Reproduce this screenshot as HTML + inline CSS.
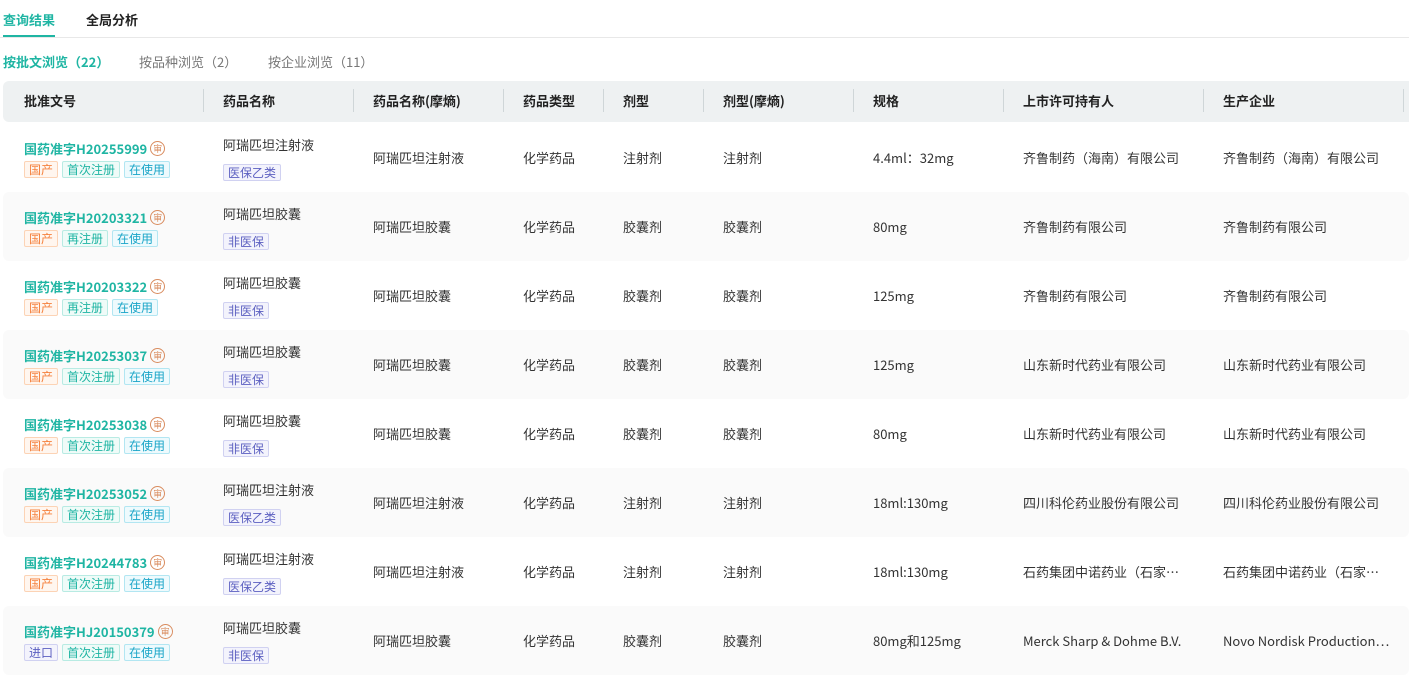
<!DOCTYPE html>
<html><head><meta charset="utf-8"><style>
*{box-sizing:border-box;margin:0;padding:0}
body{width:1409px;height:678px;overflow:hidden;background:#fff;font-family:"Noto Sans CJK SC","Liberation Sans",sans-serif;color:#333;font-size:13px;line-height:18px}
.tabs{position:absolute;left:0;top:0;width:1409px;height:38px;border-bottom:1px solid #e8e8e8}
.tab{position:absolute;top:11px;font-size:13px;font-weight:bold;color:#222}
.tab.on{color:#1fb5a3}
.ink{position:absolute;left:3px;top:35px;width:52px;height:2px;background:#1fb5a3}
.sub{position:absolute;top:53px;font-size:13px;color:#777}
.sub.on{color:#1fb5a3;font-weight:bold}
.hd{position:absolute;left:3px;top:81px;width:1406px;height:41px;background:#eef1f2;border-radius:6px 0 0 6px}
.hd div{position:absolute;top:11px;font-weight:bold;color:#222}
.sep{position:absolute;top:89px;width:1px;height:23px;background:#cfd6d8}
.row{position:absolute;left:3px;width:1406px;height:69px;border-radius:6px}
.row.g{background:#fafafa}
.c{position:absolute;top:26px;white-space:nowrap}
.no{position:absolute;left:21px;top:17px;color:#1fb5a3;font-weight:bold;white-space:nowrap}
.sh{display:inline-block;width:15px;height:15px;border:1px solid #d98c5f;border-radius:50%;color:#d98c5f;font-size:9px;line-height:13px;text-align:center;font-weight:normal;vertical-align:top;position:relative;top:1px;margin-left:3px}
.tags{position:absolute;left:21px;top:38px;white-space:nowrap;line-height:0}
.t{display:inline-block;height:17px;line-height:15px;padding:0 4px;border:1px solid;font-size:12px;border-radius:2px;margin-right:4px;vertical-align:top}
.o{color:#f5813d;background:#fff6ef;border-color:#fcd3b5}
.gr{color:#1fb5a3;background:#effbf8;border-color:#b8ebe3}
.b{color:#1aa5c8;background:#eefafd;border-color:#b2e6f2}
.p{color:#5b5fc0;background:#f3f3fc;border-color:#d0d1f1}
.nm{position:absolute;left:220px;top:13px}
.nt{position:absolute;left:220px;top:41px;line-height:0}
</style></head><body>
<div class="tabs"><div class="tab on" style="left:3px">查询结果</div><div class="tab" style="left:86px">全局分析</div><div class="ink"></div></div>
<div class="sub on" style="left:3px">按批文浏览（22）</div>
<div class="sub" style="left:139px">按品种浏览（2）</div>
<div class="sub" style="left:268px">按企业浏览（11）</div>
<div class="hd">
<div style="left:21px">批准文号</div><div style="left:220px">药品名称</div><div style="left:370px">药品名称(摩熵)</div><div style="left:520px">药品类型</div><div style="left:620px">剂型</div><div style="left:720px">剂型(摩熵)</div><div style="left:870px">规格</div><div style="left:1020px">上市许可持有人</div><div style="left:1220px">生产企业</div>
</div>
<div class="sep" style="left:203px"></div><div class="sep" style="left:353px"></div><div class="sep" style="left:503px"></div><div class="sep" style="left:603px"></div><div class="sep" style="left:703px"></div><div class="sep" style="left:853px"></div><div class="sep" style="left:1003px"></div><div class="sep" style="left:1203px"></div><div class="sep" style="left:1403px"></div>

<div class="row" style="top:123px"><div class="no">国药准字H20255999<span class="sh">审</span></div><div class="tags"><span class="t o">国产</span><span class="t gr">首次注册</span><span class="t b">在使用</span></div><div class="nm">阿瑞匹坦注射液</div><div class="nt"><span class="t p">医保乙类</span></div><div class="c" style="left:370px">阿瑞匹坦注射液</div><div class="c" style="left:520px">化学药品</div><div class="c" style="left:620px">注射剂</div><div class="c" style="left:720px">注射剂</div><div class="c" style="left:870px">4.4ml：32mg</div><div class="c" style="left:1020px">齐鲁制药（海南）有限公司</div><div class="c" style="left:1220px">齐鲁制药（海南）有限公司</div></div>

<div class="row g" style="top:192px"><div class="no">国药准字H20203321<span class="sh">审</span></div><div class="tags"><span class="t o">国产</span><span class="t gr">再注册</span><span class="t b">在使用</span></div><div class="nm">阿瑞匹坦胶囊</div><div class="nt"><span class="t p">非医保</span></div><div class="c" style="left:370px">阿瑞匹坦胶囊</div><div class="c" style="left:520px">化学药品</div><div class="c" style="left:620px">胶囊剂</div><div class="c" style="left:720px">胶囊剂</div><div class="c" style="left:870px">80mg</div><div class="c" style="left:1020px">齐鲁制药有限公司</div><div class="c" style="left:1220px">齐鲁制药有限公司</div></div>

<div class="row" style="top:261px"><div class="no">国药准字H20203322<span class="sh">审</span></div><div class="tags"><span class="t o">国产</span><span class="t gr">再注册</span><span class="t b">在使用</span></div><div class="nm">阿瑞匹坦胶囊</div><div class="nt"><span class="t p">非医保</span></div><div class="c" style="left:370px">阿瑞匹坦胶囊</div><div class="c" style="left:520px">化学药品</div><div class="c" style="left:620px">胶囊剂</div><div class="c" style="left:720px">胶囊剂</div><div class="c" style="left:870px">125mg</div><div class="c" style="left:1020px">齐鲁制药有限公司</div><div class="c" style="left:1220px">齐鲁制药有限公司</div></div>

<div class="row g" style="top:330px"><div class="no">国药准字H20253037<span class="sh">审</span></div><div class="tags"><span class="t o">国产</span><span class="t gr">首次注册</span><span class="t b">在使用</span></div><div class="nm">阿瑞匹坦胶囊</div><div class="nt"><span class="t p">非医保</span></div><div class="c" style="left:370px">阿瑞匹坦胶囊</div><div class="c" style="left:520px">化学药品</div><div class="c" style="left:620px">胶囊剂</div><div class="c" style="left:720px">胶囊剂</div><div class="c" style="left:870px">125mg</div><div class="c" style="left:1020px">山东新时代药业有限公司</div><div class="c" style="left:1220px">山东新时代药业有限公司</div></div>

<div class="row" style="top:399px"><div class="no">国药准字H20253038<span class="sh">审</span></div><div class="tags"><span class="t o">国产</span><span class="t gr">首次注册</span><span class="t b">在使用</span></div><div class="nm">阿瑞匹坦胶囊</div><div class="nt"><span class="t p">非医保</span></div><div class="c" style="left:370px">阿瑞匹坦胶囊</div><div class="c" style="left:520px">化学药品</div><div class="c" style="left:620px">胶囊剂</div><div class="c" style="left:720px">胶囊剂</div><div class="c" style="left:870px">80mg</div><div class="c" style="left:1020px">山东新时代药业有限公司</div><div class="c" style="left:1220px">山东新时代药业有限公司</div></div>

<div class="row g" style="top:468px"><div class="no">国药准字H20253052<span class="sh">审</span></div><div class="tags"><span class="t o">国产</span><span class="t gr">首次注册</span><span class="t b">在使用</span></div><div class="nm">阿瑞匹坦注射液</div><div class="nt"><span class="t p">医保乙类</span></div><div class="c" style="left:370px">阿瑞匹坦注射液</div><div class="c" style="left:520px">化学药品</div><div class="c" style="left:620px">注射剂</div><div class="c" style="left:720px">注射剂</div><div class="c" style="left:870px">18ml:130mg</div><div class="c" style="left:1020px">四川科伦药业股份有限公司</div><div class="c" style="left:1220px">四川科伦药业股份有限公司</div></div>

<div class="row" style="top:537px"><div class="no">国药准字H20244783<span class="sh">审</span></div><div class="tags"><span class="t o">国产</span><span class="t gr">首次注册</span><span class="t b">在使用</span></div><div class="nm">阿瑞匹坦注射液</div><div class="nt"><span class="t p">医保乙类</span></div><div class="c" style="left:370px">阿瑞匹坦注射液</div><div class="c" style="left:520px">化学药品</div><div class="c" style="left:620px">注射剂</div><div class="c" style="left:720px">注射剂</div><div class="c" style="left:870px">18ml:130mg</div><div class="c" style="left:1020px">石药集团中诺药业（石家…</div><div class="c" style="left:1220px">石药集团中诺药业（石家…</div></div>

<div class="row g" style="top:606px"><div class="no">国药准字HJ20150379<span class="sh">审</span></div><div class="tags"><span class="t p">进口</span><span class="t gr">首次注册</span><span class="t b">在使用</span></div><div class="nm">阿瑞匹坦胶囊</div><div class="nt"><span class="t p">非医保</span></div><div class="c" style="left:370px">阿瑞匹坦胶囊</div><div class="c" style="left:520px">化学药品</div><div class="c" style="left:620px">胶囊剂</div><div class="c" style="left:720px">胶囊剂</div><div class="c" style="left:870px">80mg和125mg</div><div class="c" style="left:1020px">Merck Sharp &amp; Dohme B.V.</div><div class="c" style="left:1220px">Novo Nordisk Production…</div></div>
</body></html>
